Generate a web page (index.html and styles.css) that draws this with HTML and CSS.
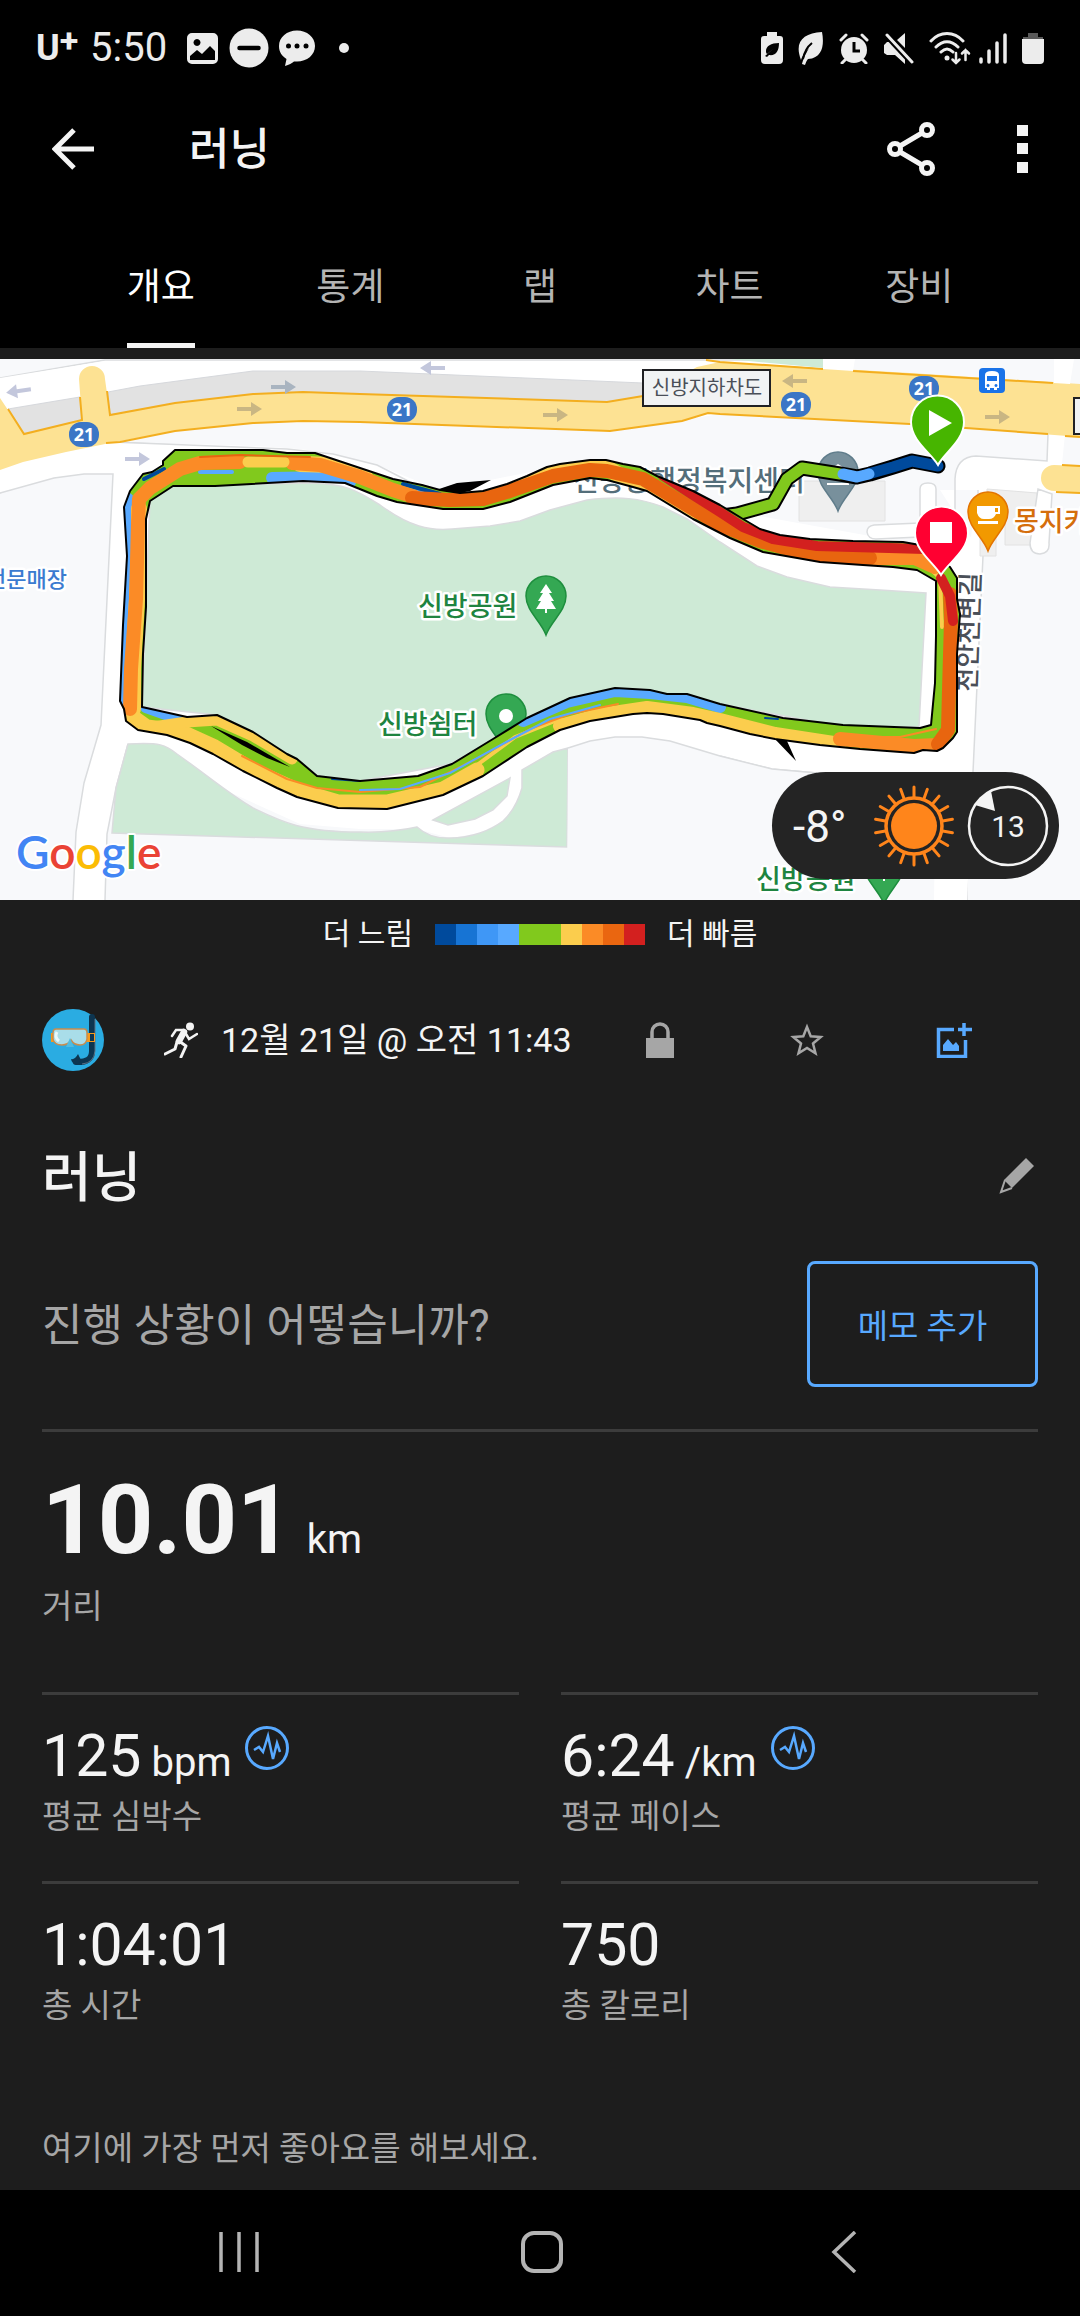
FILE: index.html
```
<!DOCTYPE html>
<html lang="ko">
<head>
    <meta charset="UTF-8">
    <meta name="viewport" content="width=device-width, initial-scale=1.0">
    <title>러닝</title>
    <link rel="stylesheet" href="styles.css">
</head>
<body>
    <div class="status-bar">
        <div class="status-left">
            <span class="carrier">U<sup>+</sup></span>
            <span class="clock">5:50</span>
            <svg class="status-image" width="31" height="31" viewBox="0 0 31 31"><path fill-rule="evenodd" fill="#ececec" d="M5 0h21a5 5 0 0 1 5 5v21a5 5 0 0 1-5 5H5a5 5 0 0 1-5-5V5a5 5 0 0 1 5-5zM10 6a3.500 3.500 0 1 0 0.010 0zM3 27h25v-9l-5-5-8 8-5-4-7 6z"/></svg>
            <svg width="40" height="40" viewBox="0 0 40 40"><circle cx="20" cy="20" r="19.500" fill="#ececec"/><path d="M10.500 20h19" stroke="#000" stroke-width="4.500" stroke-linecap="round"/></svg>
            <svg width="36" height="36" viewBox="0 0 36 36"><path fill="#ececec" d="M18 0.500C8 0.500 0 7 0 16c0 6 3 10 7.500 13L6 36c4-1 7-3 9-4.500h3c10 0 18-6.500 18-15.500S28 .5 18 .5z"/><g fill="#000"><circle cx="9.500" cy="16" r="2.500"/><circle cx="18" cy="16" r="2.500"/><circle cx="27" cy="16" r="2.500"/></g></svg>
            <span class="status-dot"></span>
        </div>
        <div class="status-right">
            <svg width="22" height="32" viewBox="0 0 22 32"><path fill="#ececec" d="M6 0h10v4h3a3 3 0 0 1 3 3v21a4 4 0 0 1-4 4H4a4 4 0 0 1-4-4V7a3 3 0 0 1 3-3h3z"/><path d="M18 11c-8 0-13 3-13 8 0 1 0 2 1 3l6-5-8 7 2 1 2-2c7 1 10-4 10-12z" fill="#000"/></svg>
            <svg width="26" height="33" viewBox="0 0 26 33"><path fill="#ececec" d="M24 0c2 10 2 26-14 27-1 1-2 3-3 6l-3-1c1-4 3-9 7-16-5 5-7 9-8 12C-4 10 5 1 24 0z"/><path d="M14 11C9 15 6 21 5 27" stroke="#000" stroke-width="2" fill="none"/></svg>
            <svg width="30" height="31" viewBox="0 0 30 31"><circle cx="15" cy="17" r="13" fill="#ececec"/><path d="M2 7l5-5M28 7l-5-5M6 27l-3 3M24 27l3 3" stroke="#ececec" stroke-width="3" stroke-linecap="round"/><path d="M15 9v9h6" stroke="#000" stroke-width="3" fill="none"/></svg>
            <svg width="30" height="31" viewBox="0 0 30 31"><path fill="#ececec" d="M0 12l3-3h6l12 13v9l-10-9H3l-3-2zM13 7l8-7v15z"/><path d="M3 2l25 27" stroke="#000" stroke-width="7"/><path d="M3 2l25 27" stroke="#ececec" stroke-width="3" stroke-linecap="round"/></svg>
            <svg class="wifi" width="42" height="33" viewBox="0 0 42 33"><g fill="none" stroke="#ececec" stroke-width="3" stroke-linecap="round"><path d="M2 9C11-1 25-1 34 9M7 15c7-7 15-7 22 0M12 20c4-4 8-4 12 0"/><path d="M27 21v10M23.500 27.500l3.500 3.500 3.500-3.500M36.500 28V18M33 21.500l3.500-3.500 3.500 3.500" stroke-width="2.500"/></g><circle cx="18" cy="26" r="2.500" fill="#ececec"/></svg>
            <svg width="28" height="31" viewBox="0 0 28 31"><path d="M2 26v3M10 18v11M18 10v19M26 2v27" stroke="#ececec" stroke-width="3.500" stroke-linecap="round"/></svg>
            <svg width="22" height="32" viewBox="0 0 22 32"><path fill="#5a5a5a" d="M6 1h10v4h5v4H1V5h5z"/><path fill="#ececec" d="M0 7h22v21a4 4 0 0 1-4 4H4a4 4 0 0 1-4-4z"/></svg>
        </div>
    </div>

    <header class="app-bar">
        <button class="icon-btn back" aria-label="뒤로"><svg width="42" height="42" viewBox="0 0 42 42"><path d="M22 2L3 21l19 19M3 21h39" fill="none" stroke="#f4f4f4" stroke-width="5"/></svg></button>
        <h1 class="app-title">러닝</h1>
        <button class="icon-btn share" aria-label="공유"><svg width="48" height="54" viewBox="0 0 48 54"><g fill="none" stroke="#f4f4f4" stroke-width="5"><path d="M13 24l22-13M13 30l22 13"/><circle cx="8" cy="27" r="5.500"/><circle cx="40" cy="8" r="5.500"/><circle cx="40" cy="46" r="5.500"/></g></svg></button>
        <button class="icon-btn more" aria-label="더보기"><svg width="11" height="48" viewBox="0 0 11 48"><path d="M0 0h11v11H0zM0 18h11v11H0zM0 37h11v11H0z" fill="#f4f4f4"/></svg></button>
    </header>

    <nav class="tabs">
        <a href="#overview" class="tab active"><span>개요</span></a>
        <a href="#stats" class="tab"><span>통계</span></a>
        <a href="#laps" class="tab"><span>랩</span></a>
        <a href="#charts" class="tab"><span>차트</span></a>
        <a href="#gear" class="tab"><span>장비</span></a>
    </nav>

    <section class="map" id="overview">
        <svg class="map-canvas" viewBox="0 0 1080 541">
            <defs>
                <path id="track" d="M163 102L175 91 182 91 263 91 287 94 315 94 360 109 393 120 422 126 440 131 460 134 483 132 507 125 527 117 547 108 560 105 590 101 606 101 623 105 640 108 657 117 693 132 720 146 743 160 760 170 780 176 810 180 853 182 903 183 920 186 950 208 957 219 957 240 960 255 957 295 957 373 953 379 943 389 937 392 923 391 914 394 860 390 820 386 775 380 750 375 720 367 707 364 700 361 663 355 647 354 633 355 590 362 560 371 527 388 483 417 443 436 387 450 338 449 297 438 277 429 243 412 213 395 190 384 167 376 138 371 126 362 124 350 120 342 123 266 127 197 124 148 130 132 143 115 152 113 163 106zM150 142L173 127 215 127 303 122 345 124 377 137 397 143 443 150 483 150 510 143 553 126 590 119 607 121 633 128 647 132 693 160 730 179 763 193 820 203 863 206 893 208 917 211 936 222 936 277 935 324 931 366 920 369 843 366 783 359 720 345 687 335 667 335 650 331 615 329 570 339 527 359 493 380 452 405 418 417 360 422 317 417 297 400 287 395 253 373 217 356 187 358 142 348 143 295 146 248 146 160z"/>
                <clipPath id="trackClip"><use href="#track" clip-rule="evenodd"/></clipPath>
                <path id="poi" d="M0 0C-5-14-20-24-20-39a20 20 0 0 1 40 0C20-24 5-14 0 0z"/>
                <path id="arrow" d="M-12-2H2v-5l11 7-11 7v-5h-14z"/>
            </defs>
            <rect width="1080" height="541" fill="#f8f9fb"/>

            <!-- minor roads and parks -->
            <path fill="#fff" stroke="#dadcde" stroke-width="1.500" d="M0 19L105 1H830V100L360 100 287 90 113 83 0 134z"/>
            <path fill="#fff" d="M0 19L105 2H700V75H360L113 83 113 115H84L54 119 0 134z"/>
            <path fill="#f8f9fb" d="M110 82L175 72 253 64 360 64 610 73 720 55 910 65 1080 78V100H955L958 200H700V120L590 100 430 130 360 103 333 95 287 90z"/>
            <path fill="#fff" d="M113 84C200 85 290 86 333 95L377 106 440 131 590 101 720 150 920 186 955 150 955 120Q956 98 976 97L1047 102 1048 75H1065L1062 105 1080 110V134L995 132 991 155V187Q980 200 970 187L972 170 978 131H998 940L983 197 973 413 967 541H934L936 500 930 413H817L772 410 747 404 720 397 670 382 642 378H615L590 382 553 393 522 411 520 440 503 462 480 474 450 479 417 470H360L300 465 227 432 177 395 128 385 116 429 107 475 105 541H73L76 473 84 424 101 366 113 115z"/>
            <path fill="none" stroke="#dadcde" stroke-width="1.500" d="M0 134L54 119 84 115H113L101 366 84 424 76 473 73 541M105 541L107 475 116 429 128 385M113 83L287 90 333 95 377 106 410 123M720 397L747 404 772 410 817 414M955 160V120Q956 98 976 97L1047 102 1048 75M983 197L973 413M967 541V510M934 541L936 520M995 132L990 155M978 131V150"/>
            <path fill="#ceead6" stroke="#dadcde" stroke-width="1.500" d="M112 474L116 429 128 385C160 383 166 386 177 395C215 422 225 432 253 449C280 462 300 473 360 473Q390 474 417 468Q430 480 450 479 465 479 480 474 492 470 503 462 516 450 522 429V411L553 393 568 389 567 488z"/>
            <path fill="#ceead6" stroke="#dadcde" stroke-width="1.500" d="M433 461L510 419 507 437 493 451 475 460 448 466z"/>
            <path fill="#f8f9fb" d="M568 389L590 382 615 378H642L670 382 720 397 772 410 817 414H973L972 430H935V541H567z"/>
            <path fill="#fff" d="M936 413H973L967 541H934z"/>
            <path fill="none" stroke="#dadcde" stroke-width="1.500" d="M568 389L590 382 615 378H642L670 382 720 397 772 410 817 414"/>
            <path fill="#ceead6" stroke="#dadcde" stroke-width="1.500" d="M150 140L173 127 310 124C345 125 355 130 380 146C410 168 430 172 452 170L490 167 520 162 550 151 587 141C620 137 640 139 663 148L687 160 720 183 757 207 787 218 830 228 880 231 926 234 919 368H843L720 345 640 330 570 339 450 405 360 422 317 417 217 356 142 348z"/>

            <!-- buildings -->
            <path fill="#efefef" stroke="#e2e2e2" d="M799 122H885V162H799zM987 130L1037 134V186H1005V160H987zM980 168H996V197H980z"/>
            <path fill="#fff" stroke="#dadcde" stroke-width="1.500" d="M920 170V130Q920 124 928 124 936 124 936 130V170zM920 164L874 166Q867 167 867 173 868 180 876 180L920 178zM1038 130L1030 184Q1030 195 1040 195 1050 194 1049 184L1052 135z"/>

            <!-- highway -->
            <path fill="#e2e2e2" stroke="#d6d8dc" d="M8 50L80 38 82 61 24 75zM108 33L140 27 253 12H360L643 24V43L607 44 360 36 303 34 175 46 110 56z"/>
            <path fill="#fde293" d="M0 39L24 75 82 61 79 20A13 13 0 0 1 105 20L110 56 175 44 253 35 303 33 360 35 607 43 643 37 697 8 720 3 910 14 1080 25V78L910 65 720 55 708 54 682 62 610 72 360 63 303 62 253 64 175 72 110 84 66 93 23 103 0 111z"/>
            <path fill="none" stroke="#f3ae1f" stroke-width="2" d="M8 50L24 75 82 61 80 38M107 32L110 56 175 44 253 35 303 33 360 35 607 43 643 37M706 1L720 3 823 10M853 12L1053 24M106 84L120 83 175 72 253 64 303 62 360 63 610 72 682 62 708 54 720 55 910 65 1048 75M1065 77L1080 78"/>
            <path fill="#ceead6" d="M728 0H823V9z"/>
            <path fill="#fff" d="M823 0H855L853 12 823 10zM1054 0H1074L1070 25 1054 24z"/>
            <path fill="#fde293" d="M1080 107L1054 106A13 13 0 0 0 1054 132L1080 134z"/>
            <path fill="none" stroke="#f3ae1f" stroke-width="2" d="M1062 106L1080 107M1056 133L1080 134"/>

            <g fill="#c3c7dc">
                <use href="#arrow" transform="translate(19 32) rotate(172)"/>
                <use href="#arrow" transform="translate(137 100)"/>
                <use href="#arrow" transform="translate(433 9) rotate(180)"/>
            </g>
            <use href="#arrow" transform="translate(283 28)" fill="#a9b4c0"/>
            <g fill="#c9b683">
                <use href="#arrow" transform="translate(249 50)"/>
                <use href="#arrow" transform="translate(555 56)"/>
                <use href="#arrow" transform="translate(795 22) rotate(180)"/>
                <use href="#arrow" transform="translate(997 58)"/>
            </g>
            <g fill="#3b76c6">
                <rect x="69" y="63" width="30" height="25" rx="12"/>
                <rect x="387" y="38" width="30" height="25" rx="12"/>
                <rect x="781" y="33" width="30" height="25" rx="12"/>
                <rect x="909" y="17" width="30" height="25" rx="12"/>
            </g>
            <g class="shield">
                <text x="84" y="82">21</text>
                <text x="402" y="57">21</text>
                <text x="796" y="52">21</text>
                <text x="924" y="36">21</text>
            </g>
            <rect x="643" y="11" width="127" height="36" fill="#f1f3f4" stroke="#202124" stroke-width="2"/>
            <text class="box-label" x="707" y="36">신방지하차도</text>
            <rect x="1074" y="39" width="20" height="36" fill="#f1f3f4" stroke="#202124" stroke-width="2"/>
            <rect x="979" y="9" width="26" height="25" rx="4" fill="#1a73e8"/>
            <path fill-rule="evenodd" fill="#fff" d="M985 16q0-4 7-4t7 4v13h-2v2h-3v-2h-4v2h-3v-2h-2zM987 17v5h10v-5zM988 25a1.500 1.500 0 1 0 .01 0zM996 25a1.500 1.500 0 1 0 .01 0z"/>

            <!-- places -->
            <g stroke-width="1.500">
                <use href="#poi" transform="translate(546 276)" fill="#34a853" stroke="#1e8e3e"/>
                <use href="#poi" transform="translate(506 394)" fill="#34a853" stroke="#1e8e3e"/>
                <use href="#poi" transform="translate(884 545)" fill="#34a853" stroke="#1e8e3e"/>
                <use href="#poi" transform="translate(838 152)" fill="#78909c" stroke="#607d8b"/>
                <use href="#poi" transform="translate(988 192)" fill="#f29900" stroke="#e37400"/>
            </g>
            <path fill="#fff" d="M546 225l6 9h-3l5 8h-3l5 8h-9v4h-2v-4h-9l5-8h-3l5-8h-3zM838 105l11 7h-22zM827 124h22v2h-22zM977 147h23v8h-4q-2 5-7 5h-5q-5 0-7-6zM978 162h20v3h-20zM883 518h2v4h-2z"/>
            <path fill="#f29900" d="M995 149h3v4h-3z"/>
            <circle cx="506" cy="357" r="7" fill="#fff"/>
            <g class="place">
                <text x="418" y="257" fill="#1e8440">신방공원</text>
                <text x="378" y="375" fill="#1e8440">신방쉼터</text>
                <text x="756" y="530" fill="#1e8440">신방공원</text>
                <text x="573" y="132" fill="#546e7a" class="place-large">신방동행정복지센터</text>
                <text x="1014" y="172" fill="#d56e0c">몽지카</text>
                <text x="67" y="228" fill="#3b7bd0" class="place-small" text-anchor="end">전문매장</text>
                <text transform="translate(976 333) rotate(-88)" fill="#4a4f58" class="street">천안천변길</text>
            </g>
            <text class="google" x="16" y="510"><tspan fill="#4285f4">G</tspan><tspan fill="#ea4335">o</tspan><tspan fill="#fbbc05">o</tspan><tspan fill="#4285f4">g</tspan><tspan fill="#34a853">l</tspan><tspan fill="#ea4335">e</tspan></text>

            <!-- track, coloured by pace -->
            <g fill="none" stroke-linejoin="round" stroke-linecap="round">
                <path stroke="#000" stroke-width="15" d="M722 157L737 155 773 145 787 120 802 109 840 115 857 118 870 115 893 108 912 102 938 107"/>
                <path stroke="#81c91d" stroke-width="11" d="M722 157L737 155 773 145 787 120 802 109 840 115"/>
                <path stroke="#004a9c" stroke-width="11" d="M868 115L893 108 912 102 938 107"/>
                <path stroke="#58a9ff" stroke-width="11" d="M843 115L857 118 869 115"/>
                <path fill="#000" stroke="none" d="M436 131L457 124 491 121 470 132 455 135zM774 379L787 382 796 402z"/>
                <g clip-path="url(#trackClip)">
                    <use href="#track" fill="#81c91d" fill-rule="evenodd"/>
                    <path stroke="#58a9ff" stroke-width="12" d="M128 140L125 160 130 200 126 270 122 345M272 119L330 118 350 123M146 348L180 360M523 362L567 343 615 332 650 334 687 338 720 348"/>
                    <path stroke="#58a9ff" stroke-width="4" d="M200 113H232M395 128L440 138M593 366L640 357"/>
                    <path stroke="#004a9c" stroke-width="4" d="M144 120L164 110M403 125L440 135"/>
                    <path stroke="#004a9c" stroke-width="2" d="M332 420L360 422M765 359L778 360"/>
                    <path stroke="#fbcd4d" stroke-width="16" d="M139 150L139 200 137 240 133 310 133 350M300 105L335 106 365 118M510 129L553 112 600 105 640 128 690 154"/>
                    <path stroke="#fbcd4d" stroke-width="15" d="M133 358L147 368 180 372 213 387 253 411 297 431 338 443 360 443 387 443 443 430 477 411"/>
                    <path stroke="#fbcd4d" stroke-width="14" d="M560 367L600 356 647 349 693 355 720 361 775 375 840 385"/>
                    <path stroke="#fbcd4d" stroke-width="11" d="M153 368L187 363 217 361 253 377 292 400"/>
                    <path stroke="#fbcd4d" stroke-width="4" d="M477 406L515 378 560 360M925 205L940 219 942 268"/>
                    <path stroke="#fb8b26" stroke-width="2" d="M242 397L287 420 317 429 360 433 420 428 480 398 530 370 570 355 618 345M840 378L900 378 936 370"/>
                    <path stroke="#58a9ff" stroke-width="2" d="M360 431L400 430 450 414 510 381 550 360 600 346"/>
                    <path fill="#000" stroke="none" d="M211 367L247 383 290 408 267 399 242 386z"/>
                    <path stroke="#fb8b26" stroke-width="14" d="M130 350L131 310 136 240 138 165 139 140 150 129 180 110 200 104 240 103M292 104L320 106 360 118 393 131 415 138M873 199H915L935 208M840 380L914 387 937 386"/>
                    <path stroke="#fbcd4d" stroke-width="11" d="M248 103H284"/>
                    <path stroke="#e8650f" stroke-width="2" d="M200 98L240 96 310 98"/>
                    <path stroke="#e8650f" stroke-width="14" d="M412 139L450 141 483 140 510 132 553 117 590 111 607 112 643 120 680 142 720 166 760 182 810 196 870 199M950 235L951 262 949 331 948 371 938 385"/>
                    <path stroke="#d3201f" stroke-width="10" d="M662 116L693 136 720 153 743 168 773 180 817 187 925 190M941 219L950 237 953 262"/>
                </g>
                <use href="#track" stroke="#000" stroke-width="2" stroke-linecap="butt"/>
            </g>

            <!-- start and finish -->
            <g stroke="#fff" stroke-width="2">
                <path fill="#47b500" d="M938 106C931 94 911 82 911 63a26.500 26.500 0 0 1 53 0C964 82 944 94 938 106z"/>
                <path fill="#ff0031" d="M941 216C934 204 915 192 915 174a26.500 26.500 0 0 1 53 0C968 192 948 204 941 216z"/>
            </g>
            <path fill="#fff" d="M929 51L952 64 929 77zM930 163H952V184H930z"/>
        </svg>
        <div class="weather">
            <span class="temp">-8°</span>
            <svg width="82" height="82" viewBox="-41 -41 82 82">
                <circle r="23" fill="#ff851b"/>
                <circle r="28" fill="none" stroke="#ff851b" stroke-width="3.500"/>
                <g stroke="#ff851b" stroke-width="3" stroke-linecap="round"><path d="M0-29V-39M0 29V39"/><path d="M0-29V-39M0 29V39" transform="rotate(20)"/><path d="M0-29V-39M0 29V39" transform="rotate(40)"/><path d="M0-29V-39M0 29V39" transform="rotate(60)"/><path d="M0-29V-39M0 29V39" transform="rotate(80)"/><path d="M0-29V-39M0 29V39" transform="rotate(100)"/><path d="M0-29V-39M0 29V39" transform="rotate(120)"/><path d="M0-29V-39M0 29V39" transform="rotate(140)"/><path d="M0-29V-39M0 29V39" transform="rotate(160)"/></g>
            </svg>
            <svg class="wind" width="82" height="82" viewBox="-41 -41 82 82">
                <circle r="39" fill="none" stroke="#f4f4f4" stroke-width="2.500"/>
                <path d="M-33-21Q-26-31-17-35L-13-15z" fill="#f4f4f4"/>
                <text y="11" text-anchor="middle">13</text>
            </svg>
        </div>
    </section>

    <div class="legend">
        <span>더 느림</span>
        <div class="scale"><i class="s1"></i><i class="s2"></i><i class="s3"></i><i class="s4"></i><i class="s5"></i><i class="s5"></i><i class="s6"></i><i class="s7"></i><i class="s8"></i><i class="s9"></i></div>
        <span>더 빠름</span>
    </div>

    <main class="content">
        <div class="meta">
            <svg class="avatar" width="62" height="62" viewBox="0 0 62 62">
                <circle cx="31" cy="31" r="31" fill="#2aace2"/>
                <path d="M50 8V42Q50 54 34 53" fill="none" stroke="#0d3550" stroke-width="6" stroke-linecap="round"/>
                <path d="M53 10V42Q52 54 40 55" fill="none" stroke="#5b7286" stroke-width="1"/>
                <path d="M29 50q4 1 7-5l3 6-3 4q-6 1-7-5z" fill="#0d3550"/>
                <path d="M9 24h4v9H9zM44 24h9v9h-9z" fill="#f79a1c"/>
                <path d="M48 25h4v7h-4z" fill="#0d3550"/>
                <path d="M14 20H42Q45 20 45 24V30Q44 36 38 36 32 36 29 31 26 36 20 36 12 36 11 30V24Q11 20 14 20z" fill="#a9dde9" stroke="#c88c4e" stroke-width="1.500"/>
                <path d="M15 23q-3 5 2 9" stroke="#e8f8fb" stroke-width="3" fill="none"/>
                <path d="M28 29l-4 9h8z" fill="#4ebce2"/>
            </svg>
            <svg class="runner" width="34" height="36" viewBox="0 0 34 36"><circle cx="26" cy="4.500" r="4" fill="#f4f4f4"/><path d="M20 10L15 19" stroke="#f4f4f4" stroke-width="6.500" stroke-linecap="round"/><path d="M19 8L12 8 8 14M22 12L25 17 33 12" fill="none" stroke="#f4f4f4" stroke-width="2.500" stroke-linecap="round"/><path d="M15 19L22 24 17 35M13 20L11 27 1 32" fill="none" stroke="#f4f4f4" stroke-width="3" stroke-linejoin="round" stroke-linecap="round"/></svg>
            <span class="date">12월 21일 @ 오전 11:43</span>
            <div class="actions">
                <button class="icon-btn" aria-label="비공개"><svg width="28" height="36" viewBox="0 0 28 36"><path d="M0 16h28v20H0z" fill="#a6a6a6"/><path d="M6 18V10a8 8 0 0 1 16 0v8" fill="none" stroke="#a6a6a6" stroke-width="3.500"/></svg></button>
                <button class="icon-btn" aria-label="즐겨찾기"><svg width="34" height="34" viewBox="0 0 34 34"><path d="M17 4l3.700 9.300 10 .7-7.700 6.500 2.500 9.800-8.500-5.300-8.500 5.300L11 20.500 3.300 14l10-.7z" fill="none" stroke="#a6a6a6" stroke-width="2.500"/></svg></button>
                <button class="icon-btn" aria-label="사진 추가"><svg width="36" height="36" viewBox="0 0 36 36"><path d="M18 7.500H2.500v27h27V18" fill="none" stroke="#58a9ff" stroke-width="3.500"/><path d="M28 1v13M22 7.500h14" stroke="#58a9ff" stroke-width="3.500"/><path d="M7 29v-6l5-6 5 6 3-3 3 4v5z" fill="#58a9ff"/></svg></button>
            </div>
        </div>

        <div class="title-row">
            <h2>러닝</h2>
            <button class="icon-btn" aria-label="이름 편집"><svg width="36" height="36" viewBox="0 0 36 36"><path d="M27 0l8 8-22 22-8-8z" fill="#a6a6a6"/><path d="M6 22L2 34l11-4" fill="none" stroke="#a6a6a6" stroke-width="2"/></svg></button>
        </div>

        <div class="note-row">
            <p>진행 상황이 어떻습니까?</p>
            <button class="note-btn">메모 추가</button>
        </div>

        <div class="distance">
            <div class="big">10.01<small>km</small></div>
            <div class="label">거리</div>
        </div>

        <div class="stats">
            <div class="stat">
                <div class="value">125<small>bpm</small><svg class="pulse" width="44" height="46" viewBox="0 0 44 46"><circle cx="22" cy="23" r="20.500" fill="none" stroke="#58a9ff" stroke-width="3"/><path d="M9 25l5-3 4 5 5-16 5 23 4-16 3 9" fill="none" stroke="#58a9ff" stroke-width="2.500"/></svg></div>
                <div class="label">평균 심박수</div>
            </div>
            <div class="stat">
                <div class="value">6:24<small>/km</small><svg class="pulse" width="44" height="46" viewBox="0 0 44 46"><circle cx="22" cy="23" r="20.500" fill="none" stroke="#58a9ff" stroke-width="3"/><path d="M9 25l5-3 4 5 5-16 5 23 4-16 3 9" fill="none" stroke="#58a9ff" stroke-width="2.500"/></svg></div>
                <div class="label">평균 페이스</div>
            </div>
            <div class="stat">
                <div class="value">1:04:01</div>
                <div class="label">총 시간</div>
            </div>
            <div class="stat">
                <div class="value">750</div>
                <div class="label">총 칼로리</div>
            </div>
        </div>

        <p class="likes">여기에 가장 먼저 좋아요를 해보세요.</p>
    </main>

    <footer class="nav-bar">
        <button class="icon-btn" aria-label="최근 앱"><svg width="42" height="42" viewBox="0 0 42 42"><path d="M3 1v40M21 1v40M39 1v40" stroke="#b4b4b4" stroke-width="3.500"/></svg></button>
        <button class="icon-btn" aria-label="홈"><svg width="42" height="42" viewBox="0 0 42 42"><rect x="2" y="2" width="38" height="38" rx="11" fill="none" stroke="#b4b4b4" stroke-width="4"/></svg></button>
        <button class="icon-btn" aria-label="이전"><svg width="42" height="42" viewBox="0 0 42 42"><path d="M32 1L11 21l21 20" fill="none" stroke="#b4b4b4" stroke-width="3.500"/></svg></button>
    </footer>
</body>
</html>
```

FILE: styles.css
```
* {
    box-sizing: border-box;
}

body {
    margin: 0;
    min-height: 100vh;
    display: flex;
    flex-direction: column;
    background: #1d1d1d;
    color: #f4f4f4;
    font-family: Roboto, "Noto Sans CJK KR", sans-serif;
    font-size: 33px;
}

svg {
    display: block;
    flex: none;
}

h1, h2, p {
    margin: 0;
    font-weight: 500;
}

.icon-btn {
    display: flex;
    align-items: center;
    justify-content: center;
    background: none;
    border: 0;
    padding: 0;
}

.status-bar {
    display: flex;
    justify-content: space-between;
    height: 96px;
    padding: 0 36px;
    background: #000;
}

.status-left, .status-right {
    display: flex;
    align-items: center;
}
.status-right {
    gap: 15px;
}
.wifi {
    margin-right: -7px;
}

.carrier {
    width: 54px;
    font-size: 36px;
    font-weight: 700;
    line-height: 40px;
    color: #ececec;
}
.carrier sup {
    font-size: 34px;
    line-height: 0;
    vertical-align: 8px;
}

.clock {
    margin-right: 20px;
    font-size: 40px;
    line-height: 40px;
    color: #ececec;
}

.status-image {
    margin-right: 11px;
}
.status-image + svg {
    margin-right: 10px;
}

.status-dot {
    width: 10px;
    height: 10px;
    margin-left: 24px;
    border-radius: 50%;
    background: #ececec;
}

.app-bar {
    display: flex;
    align-items: center;
    height: 118px;
    padding: 0 52px 12px;
    background: #000;
}
.app-title {
    flex: 1;
    margin-left: 95px;
    padding-top: 2px;
    font-size: 44px;
    line-height: 60px;
}
.more {
    margin-left: 82px;
}

.tabs {
    display: flex;
    height: 134px;
    padding: 0 66px;
    background: #000;
}
.tab {
    flex: 1;
    display: flex;
    justify-content: center;
    font-size: 37px;
    line-height: 50px;
    color: #b4b4b4;
    text-decoration: none;
}
.tab span {
    padding-top: 49px;
    border-bottom: 5px solid transparent;
}
.tab.active span {
    border-color: #f4f4f4;
}
.tab.active {
    color: #fff;
}

.map {
    position: relative;
    margin-top: 11px;
}
.map-canvas {
    width: 100%;
}

.shield {
    font-family: "Noto Sans", sans-serif;
    font-size: 18px;
    font-weight: 700;
    fill: #fff;
    text-anchor: middle;
}
.box-label {
    font-size: 20px;
    fill: #4a4f58;
    text-anchor: middle;
}
.place {
    font-size: 27px;
    font-weight: 500;
    stroke: #fff;
    stroke-width: 5px;
    stroke-linejoin: round;
    paint-order: stroke;
}
.place .place-small {
    font-size: 22px;
}
.place .place-large {
    font-size: 28px;
}
.place .street {
    font-size: 26px;
}
.google {
    font-family: Lato, sans-serif;
    font-size: 46px;
    font-weight: 600;
    stroke: #fff;
    stroke-width: 4px;
    stroke-linejoin: round;
    paint-order: stroke;
}

/* sits over the map */
.weather {
    position: absolute;
    right: 21px;
    bottom: 21px;
    display: flex;
    align-items: center;
    gap: 12px;
    padding: 12px 10px 12px 21px;
    height: 107px;
    border-radius: 54px;
    background: #242424;
}
.temp {
    width: 68px;
    padding-top: 3px;
    font-size: 44px;
    line-height: 48px;
    white-space: nowrap;
}
.wind text {
    font-size: 30px;
    fill: #f4f4f4;
}

.legend {
    display: flex;
    justify-content: center;
    align-items: center;
    gap: 22px;
    height: 68px;
    font-size: 30px;
    line-height: 40px;
}
.scale {
    display: flex;
    height: 21px;
}
.scale i {
    width: 21px;
}
.s1 { background: #004a9c; }
.s2 { background: #1774d4; }
.s3 { background: #3f97f6; }
.s4 { background: #58a9ff; }
.s5 { background: #81c91d; }
.s6 { background: #fbcd4d; }
.s7 { background: #fb8b26; }
.s8 { background: #ea6610; }
.s9 { background: #d3201f; }

.content {
    flex: 1;
    padding: 0 42px;
}

.meta {
    display: flex;
    align-items: center;
    height: 144px;
}
.runner {
    margin: 0 23px 0 60px;
}
.date {
    font-size: 34px;
    line-height: 48px;
}
.actions {
    display: flex;
    margin-left: auto;
    padding-right: 11px;
}
.actions .icon-btn {
    width: 147px;
    height: 100px;
}

.title-row {
    display: flex;
    justify-content: space-between;
    align-items: center;
    height: 128px;
    padding-right: 3px;
}
.title-row h2 {
    padding-top: 6px;
    font-size: 54px;
    line-height: 72px;
}

.note-row {
    display: flex;
    justify-content: space-between;
    align-items: center;
    padding: 21px 0 42px;
    border-bottom: 3px solid #3c3c3c;
}
.note-row p {
    padding-top: 4px;
    font-size: 44px;
    font-weight: 400;
    line-height: 60px;
    color: #a6a6a6;
}
.note-btn {
    width: 231px;
    height: 126px;
    border: 3px solid #58a9ff;
    border-radius: 8px;
    background: none;
    color: #58a9ff;
    font: inherit;
}

.distance {
    height: 260px;
    padding-top: 38px;
}
.big {
    display: flex;
    align-items: baseline;
    gap: 14px;
    height: 100px;
    font-size: 97px;
    font-weight: 700;
    line-height: 100px;
}
small {
    font-size: 40px;
    font-weight: 400;
}
.label {
    line-height: 44px;
    color: #a6a6a6;
}
.distance .label {
    margin-top: 15px;
}

.stats {
    display: grid;
    grid-template-columns: 1fr 1fr;
    column-gap: 42px;
}
.stat {
    height: 189px;
    padding-top: 30px;
    border-top: 3px solid #3c3c3c;
}
.value {
    display: flex;
    align-items: baseline;
    gap: 10px;
    height: 70px;
    font-size: 59px;
    line-height: 62px;
}
.pulse {
    align-self: flex-start;
    margin-left: 4px;
}

.likes {
    padding: 55px 0 17px;
    font-weight: 400;
    line-height: 48px;
    color: #a6a6a6;
}

.nav-bar {
    display: flex;
    justify-content: space-between;
    align-items: center;
    height: 126px;
    padding: 0 215px 2px 218px;
    background: #000;
}
```
